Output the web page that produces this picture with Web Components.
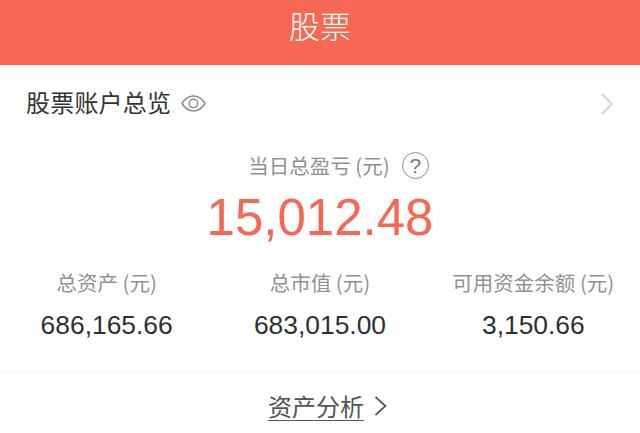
<!DOCTYPE html>
<html lang="zh-CN">
<head>
<meta charset="utf-8">
<title>股票</title>
<style>
  html, body { margin: 0; height: 433px; overflow: hidden; background: #fff; }
  body { font-family: "Noto Sans CJK SC", "Liberation Sans", sans-serif; }
</style>
</head>
<body>
<app-header>股票</app-header>
<overview-row>股票账户总览</overview-row>
<pnl-summary value="15,012.48">当日总盈亏 (元)</pnl-summary>
<stat-row>
  <stat-item value="686,165.66">总资产 (元)</stat-item>
  <stat-item value="683,015.00">总市值 (元)</stat-item>
  <stat-item value="3,150.66">可用资金余额 (元)</stat-item>
</stat-row>
<footer-link>资产分析</footer-link>

<script>
const CJK = '"Noto Sans CJK SC", sans-serif';
const NUM = '"Liberation Sans", Arial, sans-serif';

class AppHeader extends HTMLElement {
  constructor() {
    super();
    this.attachShadow({ mode: 'open' });
    this.shadowRoot.innerHTML = `
      <style>
        :host {
          display: flex;
          align-items: center;
          justify-content: center;
          height: 65px;
          padding-bottom: 17px;
          box-sizing: border-box;
          background: #f66852;
          color: #fff;
          font: 300 31px/1 ${CJK};
        }
      </style>
      <slot></slot>
    `;
  }
}

class OverviewRow extends HTMLElement {
  constructor() {
    super();
    this.attachShadow({ mode: 'open' });
    this.shadowRoot.innerHTML = `
      <style>
        :host {
          display: flex;
          align-items: center;
          height: 77px;
          padding: 0 26px;
          color: #333;
          font: 400 24px/1 ${CJK};
        }
        .label { margin-bottom: 4px; letter-spacing: 0.2px; }
        .eye { margin-left: 10px; }
        .arrow { margin-left: auto; }
      </style>
      <span class="label"><slot></slot></span>
      <svg class="eye" width="25" height="17" viewBox="0 0 25 17" fill="none" stroke="#8a8a8a" stroke-width="1.5">
        <path d="M1 8.5C4 3.6 8 1 12.5 1S21 3.6 24 8.5C21 13.400 17 16 12.500 16S4 13.400 1 8.500Z"/>
        <circle cx="12.500" cy="8.500" r="4.200"/>
      </svg>
      <svg class="arrow" width="14" height="22" viewBox="0 0 14 22" fill="none" stroke="#d4d4d4" stroke-width="2">
        <path d="M2 1l10 10L2 21"/>
      </svg>
    `;
  }
}

class PnlSummary extends HTMLElement {
  constructor() {
    super();
    this.attachShadow({ mode: 'open' });
    this.shadowRoot.innerHTML = `
      <style>
        :host {
          display: flex;
          flex-direction: column;
          align-items: center;
          padding-top: 9px;
          color: #919191;
          font: 400 20.5px/1 ${CJK};
        }
        .title { display: flex; align-items: center; height: 28px; padding-left: 37px; }
        .help {
          box-sizing: border-box;
          width: 27px;
          height: 27px;
          margin-left: 12px;
          border: 1px solid #8c8c8c;
          border-radius: 50%;
          display: flex;
          align-items: center;
          justify-content: center;
          color: #777;
          font: 400 21px/1 ${NUM};
        }
        .value {
          margin-top: 10px;
          color: #f66852;
          font: 400 51px/58px ${NUM};
        }
      </style>
      <div class="title"><slot></slot><span class="help">?</span></div>
      <div class="value"></div>
    `;
  }
  connectedCallback() {
    this.shadowRoot.querySelector('.value').textContent = this.getAttribute('value');
  }
}

class StatRow extends HTMLElement {
  constructor() {
    super();
    this.attachShadow({ mode: 'open' });
    this.shadowRoot.innerHTML = `
      <style>
        :host {
          display: grid;
          grid-template-columns: repeat(3, 1fr);
          box-sizing: border-box;
          height: 126px;
          padding-top: 21px;
          border-bottom: 1px solid #f3f3f3;
        }
      </style>
      <slot></slot>
    `;
  }
}

class StatItem extends HTMLElement {
  constructor() {
    super();
    this.attachShadow({ mode: 'open' });
    this.shadowRoot.innerHTML = `
      <style>
        :host {
          display: flex;
          flex-direction: column;
          align-items: center;
          color: #919191;
          font: 400 20.5px/28px ${CJK};
        }
        .value {
          margin-top: 13px;
          color: #2f2f2f;
          font: 400 26.4px/32px ${NUM};
        }
      </style>
      <slot></slot>
      <div class="value"></div>
    `;
  }
  connectedCallback() {
    this.shadowRoot.querySelector('.value').textContent = this.getAttribute('value');
  }
}

class FooterLink extends HTMLElement {
  constructor() {
    super();
    this.attachShadow({ mode: 'open' });
    this.shadowRoot.innerHTML = `
      <style>
        :host {
          display: flex;
          align-items: center;
          justify-content: center;
          height: 65px;
          padding-left: 15px;
          color: #555;
          font: 400 24px/1 ${CJK};
        }
        .label { text-decoration: underline; text-underline-offset: 4px; text-decoration-thickness: 1px; }
        svg { margin-left: 10px; }
      </style>
      <span class="label"><slot></slot></span>
      <svg width="13" height="20" viewBox="0 0 13 20" fill="none" stroke="#555" stroke-width="1.700">
        <path d="M1.500 1l10 9-10 9"/>
      </svg>
    `;
  }
}

customElements.define('app-header', AppHeader);
customElements.define('overview-row', OverviewRow);
customElements.define('pnl-summary', PnlSummary);
customElements.define('stat-row', StatRow);
customElements.define('stat-item', StatItem);
customElements.define('footer-link', FooterLink);
</script>
</body>
</html>
